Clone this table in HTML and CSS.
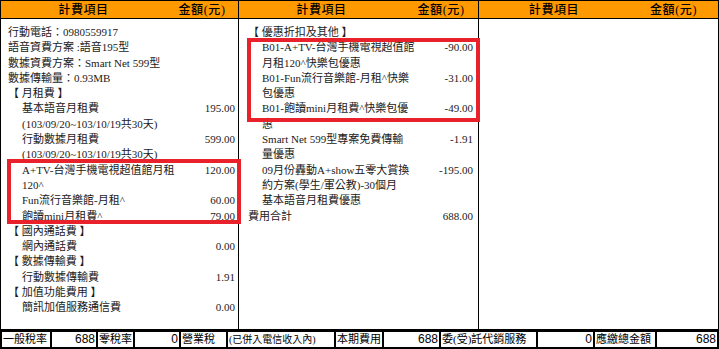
FILE: index.html
```html
<!DOCTYPE html>
<html lang="zh-Hant">
<head>
<meta charset="utf-8">
<title>計費明細</title>
<link rel="stylesheet" href="styles.css">
</head>
<body>
<div class="page">
  <div class="bill">
    <section class="col col-1">
      <div class="col-head"><span>計費項目</span><span>金額(元)</span></div>
      <div class="col-body">
        <div class="line">行動電話：0980559917</div>
        <div class="line">語音資費方案 :語音195型</div>
        <div class="line">數據資費方案：Smart Net 599型</div>
        <div class="line">數據傳輸量：0.93MB</div>
        <div class="line">【 月租費 】</div>
        <div class="row sub"><span class="name">基本語音月租費</span><span class="amt">195.00</span></div>
        <div class="line sub">(103/09/20~103/10/19共30天)</div>
        <div class="row sub"><span class="name">行動數據月租費</span><span class="amt">599.00</span></div>
        <div class="line sub">(103/09/20~103/10/19共30天)</div>
        <div class="row sub"><span class="name">A+TV-台灣手機電視超值館月租<br>120^</span><span class="amt">120.00</span></div>
        <div class="row sub"><span class="name">Fun流行音樂館-月租^</span><span class="amt">60.00</span></div>
        <div class="row sub"><span class="name">飽讀mini月租費^</span><span class="amt">79.00</span></div>
        <div class="line">【 國內通話費 】</div>
        <div class="row sub"><span class="name">網內通話費</span><span class="amt">0.00</span></div>
        <div class="line">【 數據傳輸費 】</div>
        <div class="row sub"><span class="name">行動數據傳輸費</span><span class="amt">1.91</span></div>
        <div class="line">【 加值功能費用 】</div>
        <div class="row sub"><span class="name">簡訊加值服務通信費</span><span class="amt">0.00</span></div>
      </div>
    </section>
    <section class="col col-2">
      <div class="col-head"><span>計費項目</span><span>金額(元)</span></div>
      <div class="col-body">
        <div class="line">【 優惠折扣及其他 】</div>
        <div class="row sub"><span class="name">B01-A+TV-台灣手機電視超值館<br>月租120^快樂包優惠</span><span class="amt">-90.00</span></div>
        <div class="row sub"><span class="name">B01-Fun流行音樂館-月租^快樂<br>包優惠</span><span class="amt">-31.00</span></div>
        <div class="row sub"><span class="name">B01-飽讀mini月租費^快樂包優<br>惠</span><span class="amt">-49.00</span></div>
        <div class="row sub"><span class="name">Smart Net 599型專案免費傳輸<br>量優惠</span><span class="amt">-1.91</span></div>
        <div class="row sub"><span class="name">09月份轟動A+show五零大賞換<br>約方案(學生/軍公教)-30個月<br>基本語音月租費優惠</span><span class="amt">-195.00</span></div>
        <div class="row"><span class="name">費用合計</span><span class="amt">688.00</span></div>
      </div>
    </section>
    <section class="col col-3">
      <div class="col-head"><span>計費項目</span><span>金額(元)</span></div>
      <div class="col-body"></div>
    </section>
  </div>
  <div class="totals">
    <div class="lbl">一般稅率</div>
    <div class="num">688</div>
    <div class="lbl">零稅率</div>
    <div class="num">0</div>
    <div class="lbl">營業稅</div>
    <div class="lbl note">(已併入電信收入內)</div>
    <div class="lbl">本期費用</div>
    <div class="num">688</div>
    <div class="lbl">委(受)託代銷服務</div>
    <div class="num">0</div>
    <div class="lbl">應繳總金額</div>
    <div class="num">688</div>
  </div>
  <div class="mark mark-1"></div>
  <div class="mark mark-2"></div>
</div>
</body>
</html>
```
FILE: styles.css
```css
* {
  box-sizing: border-box;
  margin: 0;
  padding: 0;
}

html, body {
  background: #fff;
}

body {
  margin: 0;
  width: 719px;
  height: 349px;
  overflow: hidden;
  font-family: "Liberation Serif", "Noto Sans CJK TC", serif;
  font-size: 11px;
  color: #1a1a1a;
}

.page {
  position: relative;
  width: 719px;
}

.bill {
  display: flex;
  height: 330px;
  border: 1px solid #000;
}

.col {
  display: flex;
  flex-direction: column;
}

.col-1 {
  width: 238px;
  border-right: 1px solid #000;
}

.col-2 {
  width: 240px;
  border-right: 1px solid #000;
}

.col-3 {
  flex: 1;
}

.col-head {
  height: 18px;
  background: #ff9900;
  border-bottom: 1px solid #000;
  display: grid;
  grid-template-columns: 165px 1fr;
  align-items: center;
  text-align: center;
  font-size: 12px;
  font-weight: 500;
  letter-spacing: 0.6px;
  color: #000;
  padding-top: 1px;
  line-height: 16px;
}

.col-3 .col-head {
  grid-template-columns: 150px 1fr;
}

.col-body {
  flex: 1;
  line-height: 15.3px;
  padding-top: 6px;
}

.col-1 .col-body {
  padding-left: 7px;
  padding-right: 3px;
}

.col-2 .col-body {
  padding-left: 9px;
  padding-right: 5px;
}

.line {
  white-space: nowrap;
}

.row {
  display: flex;
  justify-content: space-between;
  align-items: flex-start;
}

.name {
  white-space: nowrap;
}

.amt {
  text-align: right;
  white-space: nowrap;
}

.sub {
  padding-left: 14px;
}

.totals {
  display: grid;
  grid-template-columns: 48px 44px 35px 44px 45px 106px 46px 55px 95px 55px 60px 60px;
  gap: 2px;
  padding: 2px;
  background: #000;
  height: 19px;
}

.totals > div {
  background: #fff;
  height: 15px;
  line-height: 15px;
  font-size: 11px;
  white-space: nowrap;
  overflow: hidden;
  color: #000;
}

.totals .lbl {
  padding-left: 1px;
}

.totals .note {
  font-size: 10px;
}

.totals .num {
  text-align: right;
  padding-right: 1px;
  font-size: 12px;
  font-family: "Liberation Sans", Arial, sans-serif;
}

.mark {
  position: absolute;
  border: 4px solid #e8212b;
}

.mark-1 {
  left: 7px;
  top: 159px;
  width: 234px;
  height: 65px;
}

.mark-2 {
  left: 247px;
  top: 38px;
  width: 233px;
  height: 84px;
}
```
